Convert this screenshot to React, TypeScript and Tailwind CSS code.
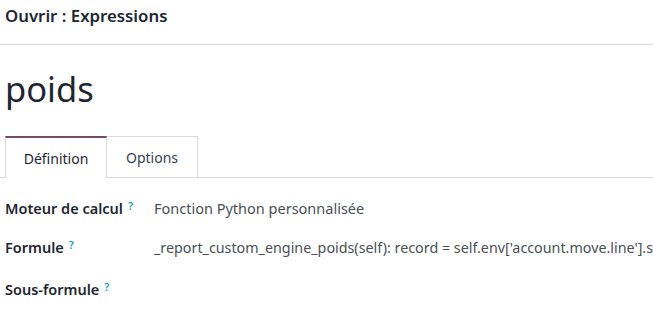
import React from "react";

function Help() {
  return <sup className="ml-[5px] text-[11px] font-semibold text-[#1a9bc7] relative -top-[4px]">?</sup>;
}

export default function App() {
  return (
    <div className="w-[653px] h-[317px] bg-white overflow-hidden text-[#212529]" style={{ fontFamily: '"Segoe UI", "Noto Sans", sans-serif' }}>
      <div className="h-[45px] border-b border-[#d8dadd] px-[5px] pt-[3px]">
        <div className="text-[16.8px] font-semibold text-[#1e2631]">Ouvrir : Expressions</div>
      </div>
      <div className="pl-[5px] pt-[18px]">
        <div className="text-[34.5px] leading-[52px] text-[#1e2631]">poids</div>
      </div>
      <div className="mt-[21px] flex border-b border-[#d8dadd] h-[42px]">
        <div className="ml-[5px] w-[102px] flex items-center justify-center border-x border-t-2 border-[#d8dadd] border-t-[#714b67] bg-white text-[14px] text-[#1e2631] -mb-px">Définition</div>
        <div className="w-[91px] flex items-center justify-center border-r border-t border-[#d8dadd] text-[14px] text-[#374151]">Options</div>
      </div>
      <div className="pl-[5px] pt-[20px] text-[14.5px]">
        <div className="flex h-[39px]">
          <div className="w-[149px] shrink-0 font-semibold text-[#1e2631] whitespace-nowrap">Moteur de calcul<Help /></div>
          <div className="text-[#4a4f55] whitespace-nowrap text-[14.5px]">Fonction Python personnalisée</div>
        </div>
        <div className="flex h-[42px]">
          <div className="w-[149px] shrink-0 font-semibold text-[#1e2631]">Formule<Help /></div>
          <div className="text-[#4a4f55] whitespace-nowrap text-[14.3px] overflow-hidden">_report_custom_engine_poids(self): record = self.env['account.move.line'].search</div>
        </div>
        <div className="flex h-[38px]">
          <div className="w-[149px] shrink-0 font-semibold text-[#1e2631]">Sous-formule<Help /></div>
        </div>
      </div>
    </div>
  );
}
